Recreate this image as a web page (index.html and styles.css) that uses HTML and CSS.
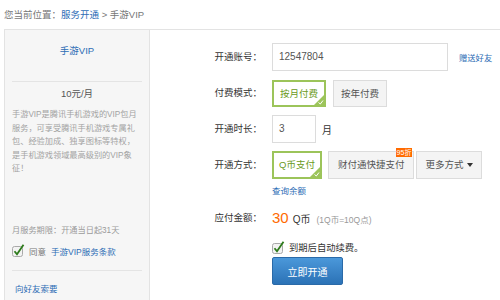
FILE: index.html
```html
<!DOCTYPE html>
<html lang="zh-CN">
  <head>
    <meta charset="UTF-8" />
    <title>手游VIP - 服务开通</title>
    <link rel="stylesheet" href="styles.css">
  </head>
  <body>
    <div class="crumb">您当前位置：<a href="#">服务开通</a> &gt; 手游VIP</div>

    <div class="main">
      <!-- left: product info -->
      <div class="side">
        <div class="side-title">手游VIP</div>
        <div class="price">10元/月</div>
        <p class="desc">手游VIP是腾讯手机游戏的VIP包月服务，可享受腾讯手机游戏专属礼包、经验加成、独享图标等特权，是手机游戏领域最高级别的VIP象征！</p>
        <div class="term">月服务期限：开通当日起31天</div>
        <div class="agree">
          <svg class="check" width="13" height="13" viewBox="0 0 13 13">
            <rect x="0.5" y="2.5" width="10" height="10" rx="2" fill="#f3f3f3" stroke="#a9a9a9" />
            <path d="M2.5 7.2 L5 10.3 L11.5 0.8" fill="none" stroke="#2e7b1c" stroke-width="1.8" />
          </svg>
          <span>同意</span>
          <a href="#">手游VIP服务条款</a>
        </div>
        <div class="ask"><a href="#">向好友索要</a></div>
      </div>

      <!-- right: order form -->
      <div class="form">
        <div class="row">
          <span class="label">开通账号：</span>
          <span class="input wide">12547804</span>
          <a class="gift" href="#">赠送好友</a>
        </div>

        <div class="row">
          <span class="label">付费模式：</span>
          <span class="opt on">按月付费
            <svg class="corner" width="10" height="10" viewBox="0 0 10 10">
              <polygon points="10,0 10,10 0,10" fill="#9cc45a" />
              <polyline points="4.5,7.5 6.3,9 9,5.5" fill="none" stroke="#fff" stroke-width="1" />
            </svg>
          </span>
          <span class="opt">按年付费</span>
        </div>

        <div class="row">
          <span class="label">开通时长：</span>
          <span class="input short">3</span>
          <span class="unit">月</span>
        </div>

        <div class="row">
          <span class="label">开通方式：</span>
          <div class="pay">
            <div class="opts">
              <span class="opt on">Q币支付
                <svg class="corner" width="10" height="10" viewBox="0 0 10 10">
                  <polygon points="10,0 10,10 0,10" fill="#9cc45a" />
                  <polyline points="4.5,7.5 6.3,9 9,5.5" fill="none" stroke="#fff" stroke-width="1" />
                </svg>
              </span>
              <span class="opt wide-opt">财付通快捷支付<span class="badge">95折</span></span>
              <span class="opt more">更多方式<i class="caret"></i></span>
            </div>
            <a class="balance" href="#">查询余额</a>
          </div>
        </div>

        <div class="row total">
          <span class="label">应付金额：</span>
          <span class="amount">30</span>
          <span class="coin">Q币</span>
          <span class="rate">(1Q币=10Q点)</span>
        </div>

        <div class="row renew">
          <span class="label"></span>
          <svg class="check" width="13" height="13" viewBox="0 0 13 13">
            <rect x="0.5" y="2.5" width="10" height="10" rx="2" fill="#f3f3f3" stroke="#a9a9a9" />
            <path d="M2.5 7.2 L5 10.3 L11.5 0.8" fill="none" stroke="#2e7b1c" stroke-width="1.8" />
          </svg>
          <span>到期后自动续费。</span>
        </div>

        <div class="row">
          <span class="label"></span>
          <button class="submit">立即开通</button>
        </div>
      </div>
    </div>
  </body>
</html>
```

FILE: styles.css
```css
body {
  margin: 0;
  background-color: #fff;
  font-family: "Liberation Sans", "Noto Sans CJK SC", sans-serif;
  color: #333;
}

a {
  color: #2d6db5;
  text-decoration: none;
}

.crumb {
  height: 29px;
  line-height: 29px;
  padding-left: 4px;
  font-size: 9.5px;
  color: #777;
}

.main {
  display: flex;
  margin-left: 4px;
  border-top: 1px solid #e3e3e3;
  border-left: 1px solid #e3e3e3;
  height: 270px;
  overflow: hidden;
}

/* left column */
.side {
  width: 130px;
  padding: 0 7px;
  background-color: #f6f6f6;
  border-right: 1px solid #e3e3e3;
  font-size: 8.2px;
}

.side-title {
  padding: 14px 0 23px;
  line-height: 14px;
  text-align: center;
  font-size: 9.5px;
  color: #2d6db5;
  border-bottom: 1px solid #e4e4e4;
}

.price {
  margin-top: 6px;
  line-height: 12px;
  text-align: center;
  font-size: 9.5px;
  color: #555;
}

.desc {
  margin: 8px 0 0;
  line-height: 13.5px;
  color: #a3a3a3;
}

.term {
  margin-top: 49px;
  line-height: 12px;
  color: #9a9a9a;
}

.agree {
  display: flex;
  align-items: center;
  gap: 4px;
  margin-top: 7px;
  height: 14px;
  font-size: 8.5px;
  color: #777;
}

.agree a {
  margin-left: 1px;
}

.ask {
  margin-top: 12px;
  padding: 12px 0 0 3px;
  border-top: 1px solid #e4e4e4;
  line-height: 12px;
  font-size: 8.5px;
}

/* right column */
.form {
  flex: 1;
  padding-top: 13px;
}

.row {
  display: flex;
  align-items: center;
  min-height: 28px;
  margin-bottom: 8px;
  font-size: 9.5px;
}

.label {
  width: 112px;
  margin-right: 10px;
  text-align: right;
  align-self: flex-start;
  line-height: 28px;
  color: #333;
  flex-shrink: 0;
}

.input {
  box-sizing: border-box;
  height: 28px;
  line-height: 26px;
  padding-left: 6px;
  border: 1px solid #dcdcdc;
  font-size: 10px;
  color: #555;
}

.input.wide {
  width: 176px;
}

.input.short {
  width: 44px;
}

.gift {
  margin-left: 11px;
  font-size: 8.3px;
}

.unit {
  margin-left: 6px;
  font-size: 10px;
}

.opt {
  position: relative;
  box-sizing: border-box;
  height: 27px;
  line-height: 25px;
  padding: 0 7px;
  margin-right: 7px;
  border: 1px solid #dcdcdc;
  background-color: #f4f4f4;
  color: #555;
  white-space: nowrap;
}

.opt.on {
  line-height: 23px;
  padding: 0 6px;
  border: 2px solid #9cc45a;
  background-color: #fff;
  color: #6a9a22;
}

.corner {
  position: absolute;
  right: 0;
  bottom: 0;
}

.pay {
  display: flex;
  flex-direction: column;
}

.opts {
  display: flex;
}

.opts .opt {
  height: 28px;
  line-height: 26px;
  margin-right: 6px;
}

.opts .opt.on {
  line-height: 24px;
  padding: 0 5px;
}

.opts .wide-opt {
  padding: 0 9px;
  margin-right: 2px;
}

.badge {
  position: absolute;
  top: -4px;
  right: 1px;
  padding: 0 1px;
  line-height: 9px;
  font-size: 7px;
  color: #fff;
  background-color: #ff6a00;
}

.more {
  padding: 0 8px;
}

.caret {
  display: inline-block;
  margin-left: 4px;
  vertical-align: middle;
  border-left: 3px solid transparent;
  border-right: 3px solid transparent;
  border-top: 4px solid #333;
}

.balance {
  margin-top: 6px;
  line-height: 12px;
  font-size: 8.5px;
}

.total {
  min-height: 26px;
  align-items: baseline;
}

.total .label {
  line-height: 26px;
}

.amount {
  font-size: 15px;
  line-height: 26px;
  color: #ff6a00;
}

.coin {
  margin-left: 4px;
  font-size: 10px;
  color: #333;
}

.rate {
  margin-left: 6px;
  font-size: 8.5px;
  color: #999;
}

.renew {
  min-height: 16px;
  margin-bottom: 2px;
  font-size: 9.3px;
}

.renew .label {
  line-height: 16px;
}

.renew .check {
  margin-right: 4px;
}

.submit {
  width: 71px;
  height: 28px;
  border: 1px solid #2a6aa8;
  border-radius: 2px;
  background: linear-gradient(#4b98da, #2b72b6);
  color: #fff;
  font-family: inherit;
  font-size: 10px;
  cursor: pointer;
}
```
